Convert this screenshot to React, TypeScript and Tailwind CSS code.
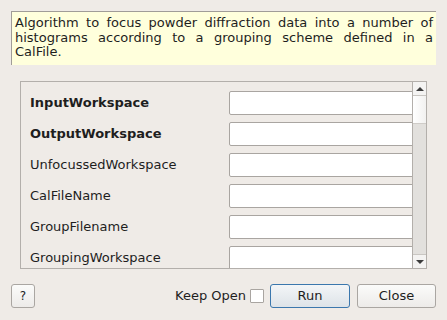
import React from "react";

const rows: { label: string; bold?: boolean }[] = [
  { label: "InputWorkspace", bold: true },
  { label: "OutputWorkspace", bold: true },
  { label: "UnfocussedWorkspace" },
  { label: "CalFileName" },
  { label: "GroupFilename" },
  { label: "GroupingWorkspace" },
];

export default function App() {
  return (
    <div
      className="w-[447px] h-[320px] bg-[#efebe7] text-[#1e1e1e] overflow-hidden flex flex-col"
      style={{ fontFamily: '"DejaVu Sans", sans-serif' }}
    >
      <div className="mx-[11px] mt-[11px] h-[54px] bg-[#ffffdc] border-t border-l border-[#a09c98] px-[3px] pt-[4px] text-[13px] leading-[14.5px] text-justify">
        Algorithm to focus powder diffraction data into a number of histograms according to a grouping scheme defined in a CalFile.
      </div>

      <div className="ml-[20px] mr-[20px] mt-[16px] h-[188px] border border-[#b3afab] flex overflow-hidden">
        <div className="flex-1 overflow-hidden pt-[9px] pl-[9px] flex flex-col gap-[7px]">
          {rows.map((r) => (
            <div key={r.label} className="flex items-center h-[24px] shrink-0">
              <div
                className={`w-[199px] shrink-0 text-[13px] ${r.bold ? "font-bold" : ""}`}
              >
                {r.label}
              </div>
              <div className="h-[24px] w-[200px] shrink-0 bg-white border border-[#a9a5a1] rounded-[2px]" />
            </div>
          ))}
        </div>
        <div className="w-[14px] shrink-0 border-l border-[#b3afab] flex flex-col bg-[#e2e0dd]">
          <div className="h-[14px] flex items-center justify-center bg-[#f4f3f2] border-b border-[#c9c6c2]">
            <div className="w-0 h-0 border-l-[4px] border-r-[4px] border-b-[4px] border-l-transparent border-r-transparent border-b-[#3c3c3c]" />
          </div>
          <div className="h-[28px] bg-gradient-to-r from-[#ffffff] to-[#f2f1f0] border-b border-[#cfccc8]" />
          <div className="flex-1" />
          <div className="h-[14px] flex items-center justify-center bg-[#f4f3f2] border-t border-[#c9c6c2]">
            <div className="w-0 h-0 border-l-[4px] border-r-[4px] border-t-[4px] border-l-transparent border-r-transparent border-t-[#3c3c3c]" />
          </div>
        </div>
      </div>

      <div className="mt-[15px] mx-[11px] flex items-center h-[24px] text-[13px]">
        <div className="w-[24px] h-[24px] border border-[#aaa6a2] rounded-[3px] bg-gradient-to-b from-[#fbfbfa] to-[#edebe9] flex items-center justify-center text-[12px]">
          ?
        </div>
        <div className="flex-1" />
        <span className="mr-[4px]">Keep Open</span>
        <div className="w-[14px] h-[14px] bg-white border border-[#a9a5a1] rounded-[1px] mr-[6px]" />
        <div className="w-[80px] h-[24px] border border-[#3b77ad] rounded-[3px] bg-gradient-to-b from-[#f3f5f7] to-[#dde3e8] flex items-center justify-center">
          Run
        </div>
        <div className="w-[79px] h-[24px] ml-[7px] border border-[#aaa6a2] rounded-[3px] bg-gradient-to-b from-[#fbfbfa] to-[#edebe9] flex items-center justify-center">
          Close
        </div>
      </div>
    </div>
  );
}
